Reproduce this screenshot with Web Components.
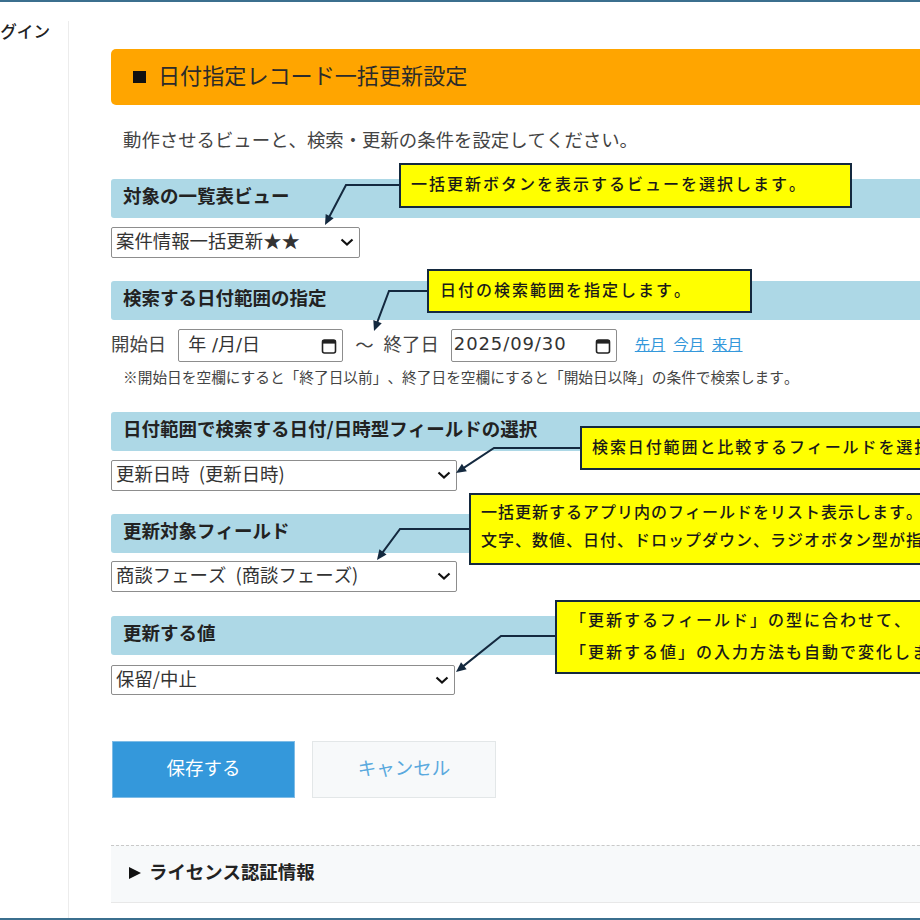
<!DOCTYPE html>
<html lang="ja">
<head>
<meta charset="utf-8">
<title>日付指定レコード一括更新設定</title>
<style>
  html, body { margin: 0; height: 920px; overflow: hidden; background: #fff; }
  body { font-family: "Noto Sans CJK JP", "Noto Sans", sans-serif; color: #333;
    font-kerning: none; font-feature-settings: "palt" 0, "kern" 0; text-spacing-trim: space-all; text-autospace: no-autospace; }
</style>
</head>
<body>
<plugin-shell>
  <span slot="side">プラグイン</span>

  <page-title>日付指定レコード一括更新設定</page-title>
  <lead-text>動作させるビューと、検索・更新の条件を設定してください。</lead-text>

  <section-bar style="margin-top:24px">対象の一覧表ビュー</section-bar>
  <drop-select style="margin-top:9px;width:249px">案件情報一括更新★★</drop-select>

  <section-bar style="margin-top:23px">検索する日付範囲の指定</section-bar>
  <date-range style="margin-top:9px"></date-range>
  <small-note style="margin-top:5px">※開始日を空欄にすると「終了日以前」、終了日を空欄にすると「開始日以降」の条件で検索します。</small-note>

  <section-bar style="margin-top:25px">日付範囲で検索する日付/日時型フィールドの選択</section-bar>
  <drop-select style="margin-top:9px;width:346px">更新日時 (更新日時)</drop-select>

  <section-bar style="margin-top:23px">更新対象フィールド</section-bar>
  <drop-select style="margin-top:8px;width:346px">商談フェーズ (商談フェーズ)</drop-select>

  <section-bar style="margin-top:24px">更新する値</section-bar>
  <drop-select style="margin-top:10px;width:344px;height:30px">保留/中止</drop-select>

  <button-row style="margin-top:46px">
    <action-button kind="save">保存する</action-button>
    <action-button kind="cancel">キャンセル</action-button>
  </button-row>

  <license-panel style="margin-top:47px">ライセンス認証情報</license-panel>

  <!-- 説明の吹き出し (スクリーンショットに重ねた注釈) -->
  <note-callout slot="overlay" x="399" y="163" w="453" h="45" pad="12" points="399,185 346,185 325,225">一括更新ボタンを表示するビューを選択します。</note-callout>
  <note-callout slot="overlay" x="427" y="269" w="325" h="44" pad="13" points="427,291 389,291 374,331">日付の検索範囲を指定します。</note-callout>
  <note-callout slot="overlay" x="580" y="426" w="400" h="44" pad="12" ls="1.9" points="580,448 494,448 456,473">検索日付範囲と比較するフィールドを選択します。</note-callout>
  <note-callout slot="overlay" x="469" y="493" w="520" h="72" pad="12" pb="8" ls="1" points="469,529 400,529 377,560">一括更新するアプリ内のフィールドをリスト表示します。<br>文字、数値、日付、ドロップダウン、ラジオボタン型が指定できます。</note-callout>
  <note-callout slot="overlay" x="555" y="600" w="440" h="74" pad="15" lh="32" points="555,636 501,636 456,672">「更新するフィールド」の型に合わせて、<br>「更新する値」の入力方法も自動で変化します。</note-callout>
</plugin-shell>

<script>
// 小さな共通ヘルパー: 文字列のマークアップから open な shadow root を作る
function shadow(el, html) {
  el.attachShadow({ mode: 'open' }).innerHTML = html;
}

class PluginShell extends HTMLElement {
  constructor() {
    super();
    shadow(this, `
      <style>
        :host { display: flex; flex-direction: column; width: 920px; height: 920px; position: relative; overflow: hidden; }
        .edge { height: 2px; flex: none; background: #3b6f8e; }
        .body { flex: 1; display: flex; min-height: 0; }
        .side {
          flex: none; width: 50px; padding-right: 18px; margin-top: 19px; border-right: 1px solid #ececec;
          display: flex; justify-content: flex-end; overflow: hidden;
          font-size: 16.6px; font-weight: 500; color: #222; line-height: 20px;
        }
        .side div { white-space: nowrap; flex: none; height: 20px; }
        .main { flex: 1; min-width: 0; padding: 47px 0 0 42px; }
      </style>
      <div class="edge"></div>
      <div class="body">
        <div class="side"><div><slot name="side"></slot></div></div>
        <div class="main"><slot></slot></div>
      </div>
      <div class="edge"></div>
      <slot name="overlay"></slot>
    `);
  }
}

class PageTitle extends HTMLElement {
  constructor() {
    super();
    shadow(this, `
      <style>
        :host { display: flex; align-items: center; box-sizing: border-box; height: 56px; background: #ffa500; border-radius: 5px 0 0 5px;
          padding: 0 0 6px 22px; font-size: 22.1px; color: #2b2b2b; }
        .mark { width: 13px; height: 12px; background: #111; margin: 6px 12px 0 0; flex: none; }
      </style>
      <span class="mark"></span><slot></slot>
    `);
  }
}

class LeadText extends HTMLElement {
  constructor() {
    super();
    shadow(this, `
      <style>:host { display: block; margin-top: 20px; padding-left: 12px; height: 30px; line-height: 28px; font-size: 18.4px; color: #444; white-space: nowrap; }</style>
      <slot></slot>
    `);
  }
}

class SectionBar extends HTMLElement {
  constructor() {
    super();
    shadow(this, `
      <style>:host { display: block; height: 39px; line-height: 33px; background: #add8e6; border-radius: 3px 0 0 3px;
        padding-left: 12px; font-size: 18.5px; font-weight: 700; color: #222; white-space: nowrap; }</style>
      <slot></slot>
    `);
  }
}

class DropSelect extends HTMLElement {
  constructor() {
    super();
    shadow(this, `
      <style>
        :host { display: flex; align-items: center; justify-content: space-between; box-sizing: border-box; height: 31px;
          border: 1.5px solid #8d8d8d; border-radius: 2px; background: #fff; padding: 0 4px 0 4px;
          font-size: 18.4px; word-spacing: 5px; color: #333; white-space: nowrap; }
        span { margin-top: -5px; }
        svg { width: 16px; height: 16px; flex: none; margin-top: -1px; }
      </style>
      <span><slot></slot></span>
      <svg viewBox="0 0 16 16"><path d="M2.5 5.5 8 10.5 13.5 5.5" fill="none" stroke="#111" stroke-width="2.2"/></svg>
    `);
  }
}

class DateField extends HTMLElement {
  constructor() {
    super();
    shadow(this, `
      <style>
        :host { display: flex; align-items: center; justify-content: space-between; box-sizing: border-box; width: 166px; height: 33px;
          border: 1.5px solid #8d8d8d; border-radius: 2px; padding: 0 4px 5px 2px; font-size: 18px; color: #333; white-space: nowrap;
          font-family: "DejaVu Sans", "Noto Sans CJK JP", sans-serif; letter-spacing: .9px; }
        svg { width: 18px; height: 18px; flex: none; margin-top: 6px; }
      </style>
      <span><slot></slot></span>
      <svg viewBox="0 0 18 18"><rect x="2.5" y="3" width="13" height="13" rx="2" fill="none" stroke="#222" stroke-width="1.6"/><rect x="2.5" y="3" width="13" height="3.6" fill="#222"/></svg>
    `);
  }
}

class DateRange extends HTMLElement {
  constructor() {
    super();
    shadow(this, `
      <style>
        :host { display: flex; align-items: center; font-size: 18.4px; color: #444; white-space: nowrap; height: 33px; }
        .start { margin: -5px 12px 0 0; }
        .tilde { margin: -3px 10px 0 12px; }
        .end { margin: -5px 12px 0 0; }
        nav { display: flex; gap: 8px; margin: -6px 0 0 18px; font-size: 15.3px; }
        a { color: #3498db; text-decoration: underline; }
      </style>
      <span class="start">開始日</span>
      <date-field style="width:165px;padding-left:9px;letter-spacing:0">年 /月/日</date-field>
      <span class="tilde">～</span>
      <span class="end">終了日</span>
      <date-field>2025/09/30</date-field>
      <nav><a href="#">先月</a><a href="#">今月</a><a href="#">来月</a></nav>
    `);
  }
}

class SmallNote extends HTMLElement {
  constructor() {
    super();
    shadow(this, `
      <style>:host { display: block; padding-left: 12px; height: 20px; line-height: 20px; font-size: 14.7px; color: #444; white-space: nowrap; }</style>
      <slot></slot>
    `);
  }
}

class ButtonRow extends HTMLElement {
  constructor() {
    super();
    shadow(this, `
      <style>:host { display: flex; gap: 17px; padding-left: 1px; }</style>
      <slot></slot>
    `);
  }
}

class ActionButton extends HTMLElement {
  constructor() {
    super();
    const save = this.getAttribute('kind') === 'save';
    shadow(this, `
      <style>
        :host { display: flex; align-items: center; justify-content: center; box-sizing: border-box;
          width: ${save ? 183 : 184}px; height: 57px; font-size: 18.5px; padding-bottom: 6px;
          background: ${save ? '#3498db' : '#f7f9fa'}; color: ${save ? '#fff' : '#5aa9de'};
          border: 1px solid ${save ? '#7fbce6' : '#e3e7e8'}; }
      </style>
      <slot></slot>
    `);
  }
}

class LicensePanel extends HTMLElement {
  constructor() {
    super();
    shadow(this, `
      <style>
        :host { display: flex; align-items: center; box-sizing: border-box; height: 58px; background: #f7f9fa;
          border-top: 1px dashed #c9c9c9; border-bottom: 1px solid #e8e8e8; padding: 0 0 6px 18px;
          font-size: 18.4px; font-weight: 700; color: #222; }
        .tri { width: 0; height: 0; border-left: 12px solid #111; border-top: 6px solid transparent; border-bottom: 6px solid transparent; margin: 4px 8px 0 0; }
      </style>
      <span class="tri"></span><slot></slot>
    `);
  }
}

class NoteCallout extends HTMLElement {
  constructor() {
    super();
    const x = +this.getAttribute('x'), y = +this.getAttribute('y');
    const w = +this.getAttribute('w'), h = +this.getAttribute('h');
    const pad = this.getAttribute('pad') || 12;
    const pb = this.getAttribute('pb') || 5;
    const lh = this.getAttribute('lh') || 28;
    const ls = this.getAttribute('ls') || 2;
    const pts = this.getAttribute('points').split(' ').map(p => p.split(',').map(Number));
    const last = pts[pts.length - 1], prev = pts[pts.length - 2];
    // 矢じりは最後の線分の向きに合わせて描く
    const a = Math.atan2(last[1] - prev[1], last[0] - prev[0]);
    const wing = (d) => [last[0] - 11 * Math.cos(a + d), last[1] - 11 * Math.sin(a + d)].join(',');
    const line = pts.map((p, i) => i === pts.length - 1
      ? [last[0] - 7 * Math.cos(a), last[1] - 7 * Math.sin(a)].join(',') : p.join(',')).join(' ');
    shadow(this, `
      <style>
        :host { position: absolute; left: ${x}px; top: ${y}px; width: ${w}px; height: ${h}px; box-sizing: border-box;
          background: #ff0; border: 2px solid #14293f; padding: 0 0 ${pb}px ${pad - 2}px; display: flex; align-items: center;
          font-size: 16px; font-weight: 500; letter-spacing: ${ls}px; line-height: ${lh}px; color: #1a1a1a; white-space: nowrap; }
        svg { position: absolute; left: ${-x - 2}px; top: ${-y - 2}px; width: 920px; height: 920px; overflow: visible; pointer-events: none; }
      </style>
      <svg viewBox="0 0 920 920">
        <polyline points="${line}" fill="none" stroke="#14293f" stroke-width="2"/>
        <polygon points="${last.join(',')} ${wing(.42)} ${wing(-.42)}" fill="#14293f"/>
      </svg>
      <div><slot></slot></div>
    `);
  }
}

customElements.define('plugin-shell', PluginShell);
customElements.define('page-title', PageTitle);
customElements.define('lead-text', LeadText);
customElements.define('section-bar', SectionBar);
customElements.define('drop-select', DropSelect);
customElements.define('date-field', DateField);
customElements.define('date-range', DateRange);
customElements.define('small-note', SmallNote);
customElements.define('button-row', ButtonRow);
customElements.define('action-button', ActionButton);
customElements.define('license-panel', LicensePanel);
customElements.define('note-callout', NoteCallout);
</script>
</body>
</html>
